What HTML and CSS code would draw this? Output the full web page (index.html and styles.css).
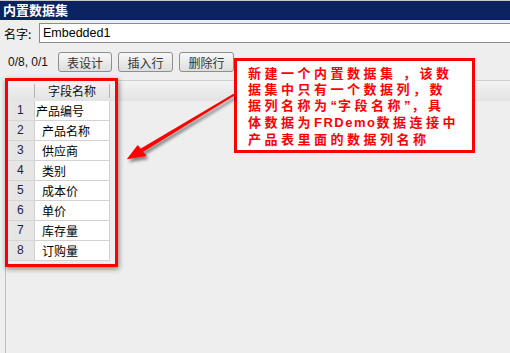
FILE: index.html
```html
<!DOCTYPE html>
<html lang="zh">
<head>
<meta charset="utf-8">
<link rel="stylesheet" href="styles.css">
</head>
<body>
<div class="window">
  <div class="titlebar">内置数据集</div>
  <div class="namerow">
    <span class="label">名字:</span>
    <div class="field">Embedded1</div>
  </div>
  <div class="toolbar">
    <span class="count">0/8, 0/1</span>
    <button class="btn w54">表设计</button>
    <button class="btn w55">插入行</button>
    <button class="btn w55">删除行</button>
  </div>
  <div class="panel">
    <div class="head">
      <div class="hc hc-num"></div>
      <div class="hc hc-name">字段名称</div>
    </div>
    <div class="row"><div class="num">1</div><div class="name first">产品编号</div></div>
    <div class="row"><div class="num">2</div><div class="name">产品名称</div></div>
    <div class="row"><div class="num">3</div><div class="name">供应商</div></div>
    <div class="row"><div class="num">4</div><div class="name">类别</div></div>
    <div class="row"><div class="num">5</div><div class="name">成本价</div></div>
    <div class="row"><div class="num">6</div><div class="name">单价</div></div>
    <div class="row"><div class="num">7</div><div class="name">库存量</div></div>
    <div class="row"><div class="num">8</div><div class="name">订购量</div></div>
  </div>

  <div class="highlight"></div>
  <div class="callout">新建一个内置数据集 ，该数<br>据集中只有一个数据列，数<br>据列名称为<span class="q">“</span>字段名称<span class="q">”</span>，具<br>体数据为<span class="lat">FRDemo</span>数据连接中<br>产品表里面的数据列名称</div>
  <svg class="arrow" width="130" height="85" viewBox="0 0 130 85">
    <defs>
      <filter id="sh" x="-20%" y="-20%" width="150%" height="150%">
        <feDropShadow dx="2" dy="3" stdDeviation="1.6" flood-color="#000" flood-opacity="0.45"/>
      </filter>
    </defs>
    <g filter="url(#sh)" fill="#ff0000" stroke="none">
      <polygon points="113.5,5.8 114.6,7.6 22,64.5 20,61"/>
      <polygon points="6.7,71.3 17.7,57 26.7,68"/>
    </g>
  </svg>
</div>
</body>
</html>
```

FILE: styles.css
```css
* { box-sizing: border-box; }
html, body { margin: 0; padding: 0; }
body {
  width: 510px;
  height: 353px;
  overflow: hidden;
  background: #eeeeee;
  font-family: "Liberation Sans", "Noto Sans CJK SC", sans-serif;
  font-size: 12px;
  color: #000;
}
.window {
  position: relative;
  width: 510px;
  height: 353px;
  display: flex;
  flex-direction: column;
}
.titlebar {
  height: 20px;
  border-top: 1px solid #c8c8c8;
  background: #0b2461;
  color: #fff;
  font-family: "Noto Sans CJK SC", sans-serif;
  font-weight: bold;
  font-size: 13px;
  line-height: 18px;
  padding-left: 3px;
}
.namerow {
  display: flex;
  align-items: center;
  padding-top: 3px;
  padding-left: 4px;
  height: 23px;
}
.label {
  width: 35px;
  font-size: 12px;
  font-family: "Noto Sans CJK SC", sans-serif;
}
.field {
  flex: 1;
  height: 20px;
  background: #fff;
  border: 1px solid #8c8c8c;
  border-right: none;
  font-size: 12.5px;
  line-height: 18px;
  padding-left: 3px;
}
.toolbar {
  display: flex;
  align-items: flex-start;
  gap: 6px;
  height: 37px;
  padding: 9px 0 0 8px;
}
.count {
  width: 44px;
  font-size: 12px;
  line-height: 20px;
  color: #111;
}
.btn {
  height: 20px;
  padding: 0;
  border: 1px solid #8e8e8e;
  border-radius: 3px;
  background: linear-gradient(#f7f7f7, #dedede);
  color: #333;
  font-family: "Noto Sans CJK SC", sans-serif;
  font-size: 12px;
  line-height: 17px;
}
.w54 { width: 54px; }
.w55 { width: 55px; }
.panel {
  flex: 1;
  margin-left: 5px;
  border-left: 1px solid #c2c2c2;
  background: #eeeeee;
}
.head {
  display: flex;
  height: 21px;
  border-top: 1px solid #cfcfcf;
  background: linear-gradient(#f3f3f3, #e3e3e3);
  align-items: center;
}
.hc {
  height: 14px;
  line-height: 14px;
  font-family: "Noto Sans CJK SC", sans-serif;
  font-size: 12px;
  color: #111;
}
.hc-num { width: 29px; border-right: 1px solid #b4b4b4; }
.hc-name {
  width: 75px;
  border-right: 1px solid #b4b4b4;
  text-align: center;
}
.row { display: flex; height: 20px; }
.num {
  width: 29px;
  background: #e6e6e6;
  border-right: 1px solid #d0d0d0;
  border-bottom: 1px solid #d6d6d6;
  padding-left: 11px;
  font-size: 12px;
  line-height: 19px;
  color: #1c1c48;
}
.name {
  width: 75px;
  background: #fff;
  border-right: 1px solid #d2d2d2;
  border-bottom: 1px solid #d2d2d2;
  padding-left: 7px;
  font-family: "Noto Sans CJK SC", sans-serif;
  font-size: 12px;
  line-height: 19px;
}
.name.first { padding-left: 1px; }
.highlight {
  position: absolute;
  left: 5px;
  top: 78px;
  width: 113px;
  height: 189px;
  border: 3px solid #ff0000;
  box-shadow: 1px 2px 5px rgba(0, 0, 0, 0.45);
}
.callout {
  position: absolute;
  left: 234px;
  top: 58px;
  width: 241px;
  height: 95px;
  border: 3px solid #ff0000;
  background: #fff;
  color: #ff0000;
  font-family: "Noto Sans CJK SC", sans-serif;
  font-weight: bold;
  font-size: 13px;
  letter-spacing: 3.5px;
  line-height: 16px;
  padding: 4px 0 0 11px;
  white-space: nowrap;
}
.callout .q {
  font-family: "Liberation Sans", sans-serif;
  letter-spacing: 1px;
}
.callout .lat {
  font-family: "Liberation Sans", sans-serif;
  letter-spacing: 1.5px;
}
.arrow {
  position: absolute;
  left: 120px;
  top: 88px;
}
```
